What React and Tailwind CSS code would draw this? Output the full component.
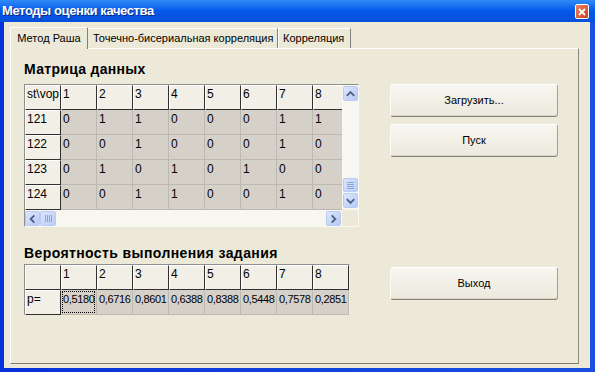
const matrix = [
  { id: '121', vals: [0, 1, 1, 0, 0, 0, 1, 1] },
  { id: '122', vals: [0, 0, 1, 0, 0, 0, 1, 0] },
  { id: '123', vals: [0, 1, 0, 1, 0, 1, 0, 0] },
  { id: '124', vals: [0, 0, 1, 1, 0, 0, 1, 0] },
];

const probs = ['0,5180', '0,6716', '0,8601', '0,6388', '0,8388', '0,5448', '0,7578', '0,2851'];
const cols = ['1', '2', '3', '4', '5', '6', '7', '8'];

const FixedCell = ({ children }) => (
  <div className="w-[36px] h-[25px] shrink-0 bg-[#f2f0e6] border-t border-l border-t-white border-l-white border-r border-b border-r-[#303030] border-b-[#303030] pl-[1px] pt-[1px] text-[12px] leading-[14px] overflow-hidden whitespace-nowrap">
    {children}
  </div>
);

const DataCell = ({ children, focus, tight }) => (
  <div
    className={
      'relative w-[36px] h-[25px] shrink-0 bg-[#d5d1c9] border-r border-b border-[#bdb9b0] pl-[2px] pt-[2px] leading-[14px] overflow-hidden whitespace-nowrap ' +
      (tight ? 'text-[11px] tracking-[-0.35px]' : 'text-[12px]')
    }
  >
    {children}
    {focus && <div className="absolute inset-[1px] border border-dotted border-black" />}
  </div>
);

const ScrollBtn = ({ dir }) => {
  const paths = {
    up: 'M3 9 L7 5 L11 9',
    down: 'M3 5 L7 9 L11 5',
    left: 'M9 3 L5 7 L9 11',
    right: 'M5 3 L9 7 L5 11',
  };
  return (
    <div className="w-[15px] h-[15px] shrink-0 rounded-[2px] border border-[#b9cbf3] bg-gradient-to-br from-[#dde7fd] to-[#b7c9f4] flex items-center justify-center">
      <svg width="14" height="14" viewBox="0 0 14 14">
        <path d={paths[dir]} fill="none" stroke="#4d6185" strokeWidth="2" />
      </svg>
    </div>
  );
};

const Thumb = ({ vertical }) => (
  <div
    className={
      'shrink-0 rounded-[2px] border border-[#b9cbf3] bg-gradient-to-br from-[#dbe5fd] to-[#bccdf5] flex items-center justify-center ' +
      (vertical ? 'w-[15px] h-[14px] flex-col gap-[1px]' : 'w-[16px] h-[15px] flex-row gap-[1px]')
    }
  >
    {[0, 1, 2, 3].map((i) => (
      <div key={i} className={vertical ? 'w-[7px] h-px bg-[#8ea4d6]' : 'w-px h-[7px] bg-[#8ea4d6]'} />
    ))}
  </div>
);

const Button = ({ children, className = '' }) => (
  <div
    className={
      'w-[168px] h-[33px] rounded-[3px] border border-t-white border-l-[#fbfaf6] border-r-[#a3a093] border-b-[#85827a] bg-gradient-to-b from-[#f7f6f0] to-[#ece9dd] shadow-[inset_0_-1px_0_#d8d4c5] flex items-center justify-center text-[11px] text-black ' +
      className
    }
  >
    {children}
  </div>
);

const TitleBar = () => (
  <div className="h-[22px] shrink-0 bg-gradient-to-b from-[#2f8cf8] via-[#0457e8] to-[#0550db] flex items-center justify-between pl-[2px] pr-[6px]">
    <span className="text-white font-bold text-[13px] tracking-[-0.4px] [text-shadow:1px_1px_0_#0a2a8a]">
      Методы оценки качества
    </span>
    <div className="w-[14px] h-[15px] rounded-[2px] border border-white bg-gradient-to-br from-[#e8835d] to-[#c9401a] flex items-center justify-center mt-[1px]">
      <svg width="10" height="10" viewBox="0 0 10 10">
        <path d="M2 2 L8 8 M8 2 L2 8" stroke="white" strokeWidth="1.8" />
      </svg>
    </div>
  </div>
);

const Tabs = () => (
  <div className="h-[26px] shrink-0 flex items-end pl-[6px]">
    <div className="relative z-10 -mb-px h-[22px] w-[78px] bg-[#ece9d8] border-t border-l border-white border-r border-r-[#808080] flex items-center justify-center text-[11px] pb-[1px]">
      Метод Раша
    </div>
    <div className="h-[20px] w-[190px] bg-[#ece9d8] border-t border-t-white border-r border-r-[#808080] pl-[5px] flex items-center text-[11px]">
      Точечно-бисериальная корреляция
    </div>
    <div className="h-[20px] w-[73px] bg-[#ece9d8] border-t border-t-white border-l border-l-white border-r border-r-[#808080] pl-[4px] flex items-center text-[11px]">
      Корреляция
    </div>
  </div>
);

const MatrixGrid = () => (
  <div className="w-[335px] h-[143px] border border-t-[#8f8f8f] border-l-[#8f8f8f] border-r-[#f8f8f4] border-b-[#f8f8f4] flex flex-col">
    <div className="flex h-[125px]">
      <div className="w-[317px] overflow-hidden flex flex-col">
        <div className="flex">
          <FixedCell>st\vop</FixedCell>
          {cols.map((c) => (
            <FixedCell key={c}>{c}</FixedCell>
          ))}
        </div>
        {matrix.map((row) => (
          <div key={row.id} className="flex">
            <FixedCell>{row.id}</FixedCell>
            {row.vals.map((v, i) => (
              <DataCell key={i}>{v}</DataCell>
            ))}
          </div>
        ))}
      </div>
      <div className="w-[16px] bg-[#f7f6f1] flex flex-col pl-px pt-px pb-[2px]">
        <ScrollBtn dir="up" />
        <div className="flex-1 flex flex-col justify-end">
          <Thumb vertical />
        </div>
        <div className="h-px" />
        <ScrollBtn dir="down" />
      </div>
    </div>
    <div className="flex h-[16px]">
      <div className="w-[317px] bg-[#f7f6f1] flex pt-px">
        <ScrollBtn dir="left" />
        <Thumb />
        <div className="flex-1" />
        <ScrollBtn dir="right" />
        <div className="w-px" />
      </div>
      <div className="w-[16px] bg-[#ece9d8]" />
    </div>
  </div>
);

const ProbGrid = () => (
  <div className="w-[326px] h-[51px] border border-t-[#8f8f8f] border-l-[#8f8f8f] border-r-[#f0efe8] border-b-[#f0efe8] flex flex-col">
    <div className="flex">
      <FixedCell>{''}</FixedCell>
      {cols.map((c) => (
        <FixedCell key={c}>{c}</FixedCell>
      ))}
    </div>
    <div className="flex">
      <FixedCell>p=</FixedCell>
      {probs.map((p, i) => (
        <DataCell key={i} focus={i === 0} tight>
          {p}
        </DataCell>
      ))}
    </div>
  </div>
);

export default function App() {
  return (
    <div className="w-[595px] h-[372px] overflow-hidden flex flex-col bg-[#0a3ada] font-['Liberation_Sans',Arial,sans-serif] text-black">
      <TitleBar />
      <div className="flex-1 flex pl-[4px] pr-[5px] pb-[4px] bg-gradient-to-r from-[#0831d9] to-[#1c4fe0]">
        <div className="flex-1 bg-[#ece9d8] flex flex-col">
          <Tabs />
          <div className="ml-[6px] w-[569px] h-[316px] border border-t-white border-l-white border-r-[#8c8a80] border-b-[#7f7d73] flex pl-[13px] pt-[12px]">
            <div className="w-[335px] flex flex-col">
              <div className="text-[14px] leading-[16px] font-bold tracking-[0.3px]">Матрица данных</div>
              <div className="mt-[7px]">
                <MatrixGrid />
              </div>
              <div className="mt-[18px] text-[14px] leading-[16px] font-bold tracking-[0.4px] whitespace-nowrap">
                Вероятность выполнения задания
              </div>
              <div className="mt-[3px]">
                <ProbGrid />
              </div>
            </div>
            <div className="ml-[31px] flex flex-col pt-[23px]">
              <Button>Загрузить...</Button>
              <Button className="mt-[7px]">Пуск</Button>
              <Button className="mt-[110px]">Выход</Button>
            </div>
          </div>
        </div>
      </div>
    </div>
  );
}
